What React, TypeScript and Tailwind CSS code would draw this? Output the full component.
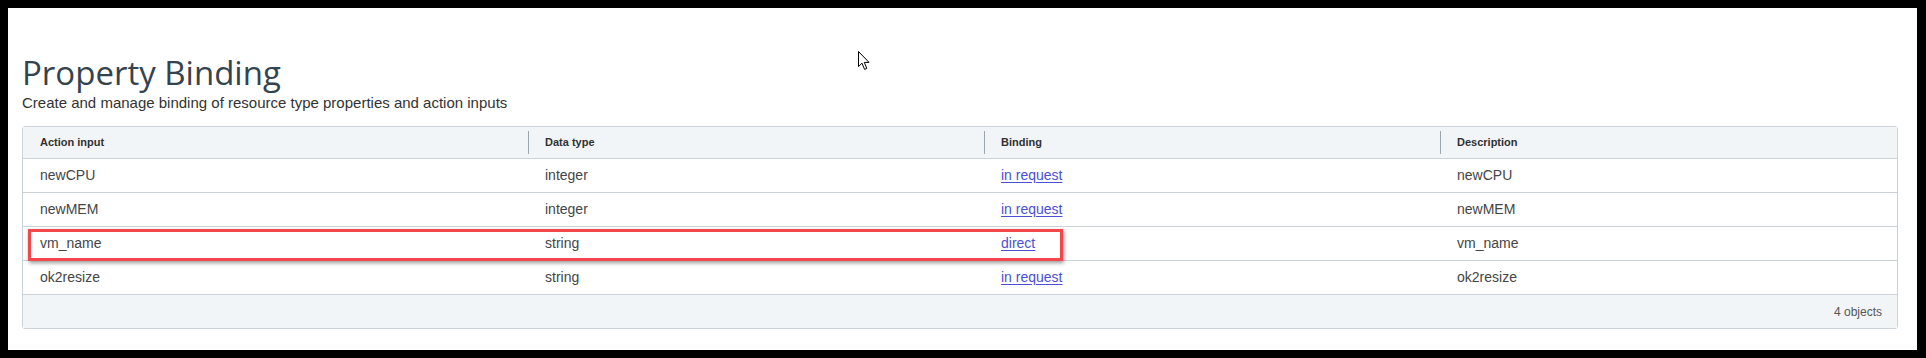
const rows = [
  { input: 'newCPU', type: 'integer', binding: 'in request', desc: 'newCPU' },
  { input: 'newMEM', type: 'integer', binding: 'in request', desc: 'newMEM' },
  { input: 'vm_name', type: 'string', binding: 'direct', desc: 'vm_name' },
  { input: 'ok2resize', type: 'string', binding: 'in request', desc: 'ok2resize' },
]

const cols = 'grid grid-cols-[505px_456px_456px_1fr]'

function HeaderCell({ label, first }: { label: string; first?: boolean }) {
  return (
    <div className="flex items-center h-full">
      {first ? <div className="w-[17px]" /> : <div className="w-px h-[23px] bg-[#9ba5ad] mr-4" />}
      <span className="text-[11px] font-bold text-[#313131]">{label}</span>
    </div>
  )
}

function Cursor() {
  return (
    <svg width="13" height="20" viewBox="0 0 13 20" className="absolute left-[850px] top-[43px]">
      <path
        d="M0.5 0.5 L0.5 15.5 L4 12.2 L6.6 18.4 L8.8 17.4 L6.3 11.4 L11 11.4 Z"
        fill="white"
        stroke="black"
        strokeWidth="1"
        strokeLinejoin="miter"
      />
    </svg>
  )
}

export default function App() {
  return (
    <div className="w-[1926px] h-[358px] bg-black pt-2 pl-2 pr-[9px] pb-2 font-['Liberation_Sans',Arial,sans-serif]">
      <div className="relative h-full bg-white pt-[47px] pl-[14px] pr-[19px]">
        <Cursor />
        <h1 className="text-[33px] leading-[36px] text-[#34434e] font-['Open_Sans',sans-serif] font-normal">
          Property Binding
        </h1>
        <p className="mt-[2px] text-[15px] leading-5 text-[#333]">
          Create and manage binding of resource type properties and action inputs
        </p>

        <div className="relative mt-[13px] border border-[#ccd3d8] rounded-[3px]">
          <div className={`${cols} h-[32px] bg-[#f1f5f8] border-b border-[#ccd3d8]`}>
            <HeaderCell label="Action input" first />
            <HeaderCell label="Data type" />
            <HeaderCell label="Binding" />
            <HeaderCell label="Description" />
          </div>

          {rows.map((r) => (
            <div
              key={r.input}
              className={`${cols} h-[34px] border-b border-[#ccd3d8] text-[14px] text-[#454545]`}
            >
              <div className="flex items-center pl-[17px]">{r.input}</div>
              <div className="flex items-center pl-[17px]">{r.type}</div>
              <div className="flex items-center pl-[17px]">
                <a href="#" className="text-[#4b4fd3] underline underline-offset-2">
                  {r.binding}
                </a>
              </div>
              <div className="flex items-center pl-[17px]">{r.desc}</div>
            </div>
          ))}

          <div className="h-[33px] bg-[#f1f5f8] flex items-center justify-end pr-[15px] text-[12px] text-[#565656]">
            4 objects
          </div>

          {/* highlight round the vm_name row */}
          <div className="absolute left-[5px] top-[102px] w-[1035px] h-[32px] border-[3px] border-[#f2474d] shadow-[1px_2px_4px_rgba(0,0,0,0.4)]" />
        </div>
      </div>
    </div>
  )
}
